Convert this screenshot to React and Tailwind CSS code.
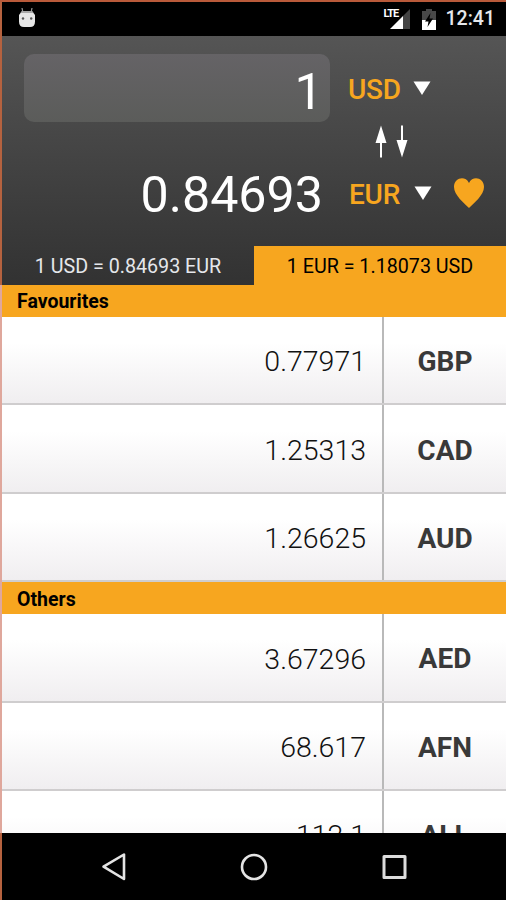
import React, { useState } from "react";

const favourites = [
  { code: "GBP", rate: "0.77971" },
  { code: "CAD", rate: "1.25313" },
  { code: "AUD", rate: "1.26625" },
];

const others = [
  { code: "AED", rate: "3.67296" },
  { code: "AFN", rate: "68.617" },
  { code: "ALL", rate: "112.1" },
];

const StatusBar = () => (
  <div className="flex h-[34px] shrink-0 items-center bg-black pl-4 pr-[11px] text-white">
    <svg width="18" height="20" viewBox="0 0 18 20" className="mb-0.5">
      <path d="M4 0l1 5M14 0l-1 5" stroke="#999" strokeWidth="1.2" />
      <path d="M4 3h10l3 4v6.500q0 5.500-5 5.500H6q-5 0-5-5.500V7z" fill="#e6e6e6" />
      <path d="M4 3h10l1.500 2h-13z" fill="#a8a8a8" />
      <circle cx="5" cy="10.500" r="1.200" fill="#555" />
      <circle cx="13.200" cy="10.500" r="1.200" fill="#555" />
    </svg>
    <div className="ml-auto flex items-center">
      <span className="mb-3 ml-0.5 inline-block w-[14px] text-[11px] font-bold leading-none tracking-[-1px]">
        LTE
      </span>
      <svg width="20" height="20" viewBox="0 0 20 20" className="-ml-[8px]">
        <path d="M20 0v20H13V7z" fill="#444" />
        <path d="M13 7v13H0z" fill="#fff" />
      </svg>
      <svg width="14" height="21" viewBox="0 0 14 21" className="ml-3">
        <path d="M4 0h6v2h4v9H0V2h4z" fill="#484848" />
        <path d="M0 11h14v10H0z" fill="#fff" />
        <path d="M8.500 4L3 12.500h3.500L5.500 18 11 9.500H7.500z" fill="#000" />
      </svg>
      <span className="ml-[10px] text-[19.500px] font-medium leading-none text-gray-200">
        12:41
      </span>
    </div>
  </div>
);

const CurrencyPicker = ({ code }) => (
  <button className="flex items-center text-[28px] font-medium leading-none text-[#f7a61f]">
    <span className="w-[65px] pt-px text-left tracking-[-0.2px]">{code}</span>
    <svg width="18" height="14" viewBox="0 0 18 14" className="mb-[3px]">
      <path d="M0.500 0.500h17L9 14z" fill="#fff" />
    </svg>
  </button>
);

const SectionHeader = ({ title }) => (
  <div className="flex h-8 shrink-0 items-center bg-[#f7a61f] pl-[15px] pt-0.5 text-[19.500px] font-bold text-black">
    {title}
  </div>
);

const RateRow = ({ code, rate }) => (
  <div className="flex h-[88.4px] shrink-0 border-b-2 border-[#cfcdce] bg-linear-to-b from-white from-30% to-[#f0eef0] text-[28.5px] leading-none text-[#393939]">
    <div className="flex flex-1 items-center justify-end border-r-2 border-[#b9b9b9] pr-4 pt-[5px] font-light text-[#111]">
      {rate}
    </div>
    <div className="flex w-[122px] items-center justify-center pt-1 text-[28px] font-bold">
      {code}
    </div>
  </div>
);

const NavBar = () => (
  <div className="flex h-[67px] shrink-0 items-center justify-center gap-[113px] bg-black">
    <svg width="26" height="30" viewBox="0 0 26 30" fill="none" stroke="#e4e4e4" strokeWidth="2.600" strokeLinejoin="round">
      <path d="M23 2.500v24.500L2.500 14.700z" />
    </svg>
    <svg width="28" height="28" viewBox="0 0 28 28" fill="none" stroke="#e4e4e4" strokeWidth="2.600">
      <circle cx="14" cy="14" r="12" />
    </svg>
    <svg width="26" height="26" viewBox="0 0 26 26" fill="none" stroke="#dcdcdc" strokeWidth="3" strokeLinejoin="round">
      <path d="M3 2.500h21v21H3z" />
    </svg>
  </div>
);

const App = () => {
  const [amount, setAmount] = useState("1");

  return (
    <div className="flex h-[900px] w-[506px] flex-col overflow-hidden border-t-2 border-[#b95a3a] bg-black font-['Roboto',sans-serif]">
      <div className="flex flex-col border-l-2 border-[#b5623f]">
        <StatusBar />
        <div className="flex h-[249px] shrink-0 flex-col bg-linear-to-b from-[#555] to-[#323232]">
          <div className="flex h-[86px] items-end pl-[22px]">
            <input
              value={amount}
              onChange={(e) => setAmount(e.target.value)}
              className="h-[68px] w-[306px] rounded-[10px] bg-linear-to-b from-[#656366] to-[#5b5c5a] pr-[7px] pt-[7px] text-right text-[50.500px] text-white outline-none"
            />
            <div className="mb-[18px] ml-[18px]">
              <CurrencyPicker code="USD" />
            </div>
          </div>
          <div className="flex h-[36px] items-end pl-[373px]">
            <svg width="34" height="33" viewBox="0 0 34 33">
              <path d="M6 0.500l5.500 17.500H7v14.500H5V18H0.500z" fill="#fff" />
              <path d="M27 32.500l-5.500-17.500H26V0.500h2V15h4.500z" fill="#fff" />
            </svg>
          </div>
          <div className="flex h-[88px] items-center pb-[14px]">
            <span className="w-[321px] text-right text-[50.200px] leading-none text-white">
              0.84693
            </span>
            <div className="mb-0.5 ml-[26px]">
              <CurrencyPicker code="EUR" />
            </div>
            <svg width="32" height="30" viewBox="0 0 32 30" className="ml-[21px] mb-[5px]">
              <path
                d="M16 30C11 25 1 17 1 9c0-9 11-12 15-4C20-3 31 0 31 9c0 8-10 16-15 21z"
                fill="#f7a61f"
              />
            </svg>
          </div>
          <div className="flex h-[39px] text-[19.700px]">
            <div className="flex w-[252px] items-center justify-center pt-0.5 text-gray-200">
              1 USD = 0.84693 EUR
            </div>
            <div className="flex flex-1 items-center justify-center bg-[#f7a61f] pt-0.5 text-black">
              1 EUR = 1.18073 USD
            </div>
          </div>
        </div>
      </div>
      <div className="flex h-[548px] shrink-0 flex-col overflow-hidden border-l-2 border-[#dfa79c] bg-white">
        <SectionHeader title="Favourites" />
        {favourites.map((item) => (
          <RateRow key={item.code} {...item} />
        ))}
        <SectionHeader title="Others" />
        {others.map((item) => (
          <RateRow key={item.code} {...item} />
        ))}
      </div>
      <div className="border-l-2 border-[#b5623f]">
        <NavBar />
      </div>
    </div>
  );
};

export default App;
